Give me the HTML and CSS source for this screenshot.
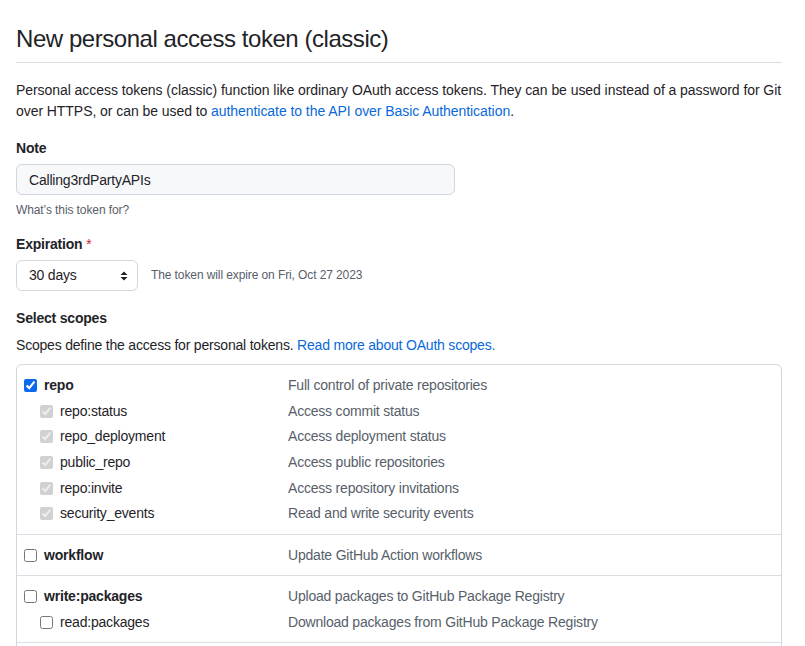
FILE: index.html
```html
<!DOCTYPE html>
<html lang="en">
<head>
<meta charset="utf-8">
<title>New personal access token (classic)</title>
<link rel="stylesheet" href="styles.css">
</head>
<body>
<main class="page">
  <div class="subhead">
    <h2 class="subhead-title">New personal access token (classic)</h2>
  </div>
  <p class="intro">Personal access tokens (classic) function like ordinary OAuth access tokens. They can be used instead of a password for Git over HTTPS, or can be used to <a href="#">authenticate to the API over Basic Authentication</a>.</p>

  <div class="form-group">
    <label class="label" for="note">Note</label>
    <input id="note" class="form-control" type="text" value="Calling3rdPartyAPIs">
    <p class="note">What’s this token for?</p>
  </div>

  <div class="form-group expiration">
    <div class="label">Expiration <span class="req">*</span></div>
    <div class="exp-row">
      <div class="select">
        <span>30 days</span>
        <svg class="select-icon" width="8" height="10" viewBox="0 0 8 10"><path d="M4 0.5 L7.5 4 L0.5 4 Z M4 9.5 L7.5 6 L0.5 6 Z" fill="#1f2328"/></svg>
      </div>
      <span class="exp-note">The token will expire on Fri, Oct 27 2023</span>
    </div>
  </div>

  <div class="form-group scopes-group">
    <div class="label">Select scopes</div>
    <p class="scopes-intro">Scopes define the access for personal tokens. <a href="#">Read more about OAuth scopes.</a></p>
    <div class="scopes">
      <div class="scope-group">
        <div class="scope-row"><label class="scope-label top"><input type="checkbox" checked><span>repo</span></label><span class="desc">Full control of private repositories</span></div>
        <div class="scope-row"><label class="scope-label sub"><input type="checkbox" checked disabled><span>repo:status</span></label><span class="desc">Access commit status</span></div>
        <div class="scope-row"><label class="scope-label sub"><input type="checkbox" checked disabled><span>repo_deployment</span></label><span class="desc">Access deployment status</span></div>
        <div class="scope-row"><label class="scope-label sub"><input type="checkbox" checked disabled><span>public_repo</span></label><span class="desc">Access public repositories</span></div>
        <div class="scope-row"><label class="scope-label sub"><input type="checkbox" checked disabled><span>repo:invite</span></label><span class="desc">Access repository invitations</span></div>
        <div class="scope-row"><label class="scope-label sub"><input type="checkbox" checked disabled><span>security_events</span></label><span class="desc">Read and write security events</span></div>
      </div>
      <div class="scope-group">
        <div class="scope-row"><label class="scope-label top"><input type="checkbox"><span>workflow</span></label><span class="desc">Update GitHub Action workflows</span></div>
      </div>
      <div class="scope-group">
        <div class="scope-row"><label class="scope-label top"><input type="checkbox"><span>write:packages</span></label><span class="desc">Upload packages to GitHub Package Registry</span></div>
        <div class="scope-row"><label class="scope-label sub"><input type="checkbox"><span>read:packages</span></label><span class="desc">Download packages from GitHub Package Registry</span></div>
      </div>
      <div class="scope-group scope-more"></div>
    </div>
  </div>
</main>
</body>
</html>
```

FILE: styles.css
```css
* { box-sizing: border-box; }

html, body {
  margin: 0;
  padding: 0;
  background: #ffffff;
}

body {
  font-family: "Liberation Sans", Arial, sans-serif;
  font-size: 14px;
  line-height: 21px;
  color: #1f2328;
  letter-spacing: -0.2px;
  overflow: hidden;
}

a {
  color: #0969da;
  text-decoration: none;
}

.page {
  width: 766px;
  margin-left: 16px;
  padding-top: 21px;
}

.subhead {
  border-bottom: 1px solid #d8dee4;
  padding-bottom: 5px;
  margin-bottom: 17px;
}

.subhead-title {
  margin: 0;
  font-size: 24px;
  line-height: 36px;
  font-weight: 400;
  letter-spacing: -0.45px;
}

.intro {
  margin: 0 0 16px;
  letter-spacing: -0.06px;
}

.form-group {
  margin-bottom: 15px;
}

.form-group.expiration {
  margin-bottom: 17px;
}

.label {
  display: block;
  font-weight: 700;
  margin-bottom: 5px;
}

.req {
  color: #cf222e;
  font-weight: 400;
}

.form-control {
  display: block;
  width: 439px;
  height: 31px;
  padding: 0 12px;
  font: inherit;
  letter-spacing: inherit;
  color: #1f2328;
  background: #f6f8fa;
  border: 1px solid #d0d7de;
  border-radius: 6px;
  outline: none;
}

.note {
  margin: 6px 0 0;
  font-size: 12px;
  line-height: 18px;
  color: #57606a;
  letter-spacing: -0.1px;
}

.exp-row {
  display: flex;
  align-items: center;
  gap: 13px;
}

.select {
  display: flex;
  align-items: center;
  justify-content: space-between;
  width: 122px;
  height: 31px;
  padding: 0 9px 0 12px;
  border: 1px solid #d0d7de;
  border-radius: 6px;
  background: #ffffff;
}

.select-icon {
  display: block;
}

.exp-note {
  font-size: 12px;
  color: #57606a;
  letter-spacing: -0.1px;
}

.scopes-group .label {
  margin-bottom: 6px;
}

.scopes-intro {
  margin: 0 0 8px;
}

.scopes {
  border: 1px solid #d0d7de;
  border-radius: 6px;
}

.scope-group {
  padding: 8px 0 7px 7px;
  border-bottom: 1px solid #d8dee4;
}

.scope-group:last-child {
  border-bottom: none;
}

.scope-more {
  height: 40px;
}

.scope-row {
  display: grid;
  grid-template-columns: 264px 1fr;
  align-items: center;
  height: 25.6px;
}

.scope-label {
  display: flex;
  align-items: center;
  gap: 7px;
}

.scope-label.top {
  font-weight: 700;
}

.scope-label.sub {
  padding-left: 16px;
}

.scope-label input {
  margin: 0;
  width: 13px;
  height: 13px;
  accent-color: #0b69f0;
}

.desc {
  color: #57606a;
}
```
